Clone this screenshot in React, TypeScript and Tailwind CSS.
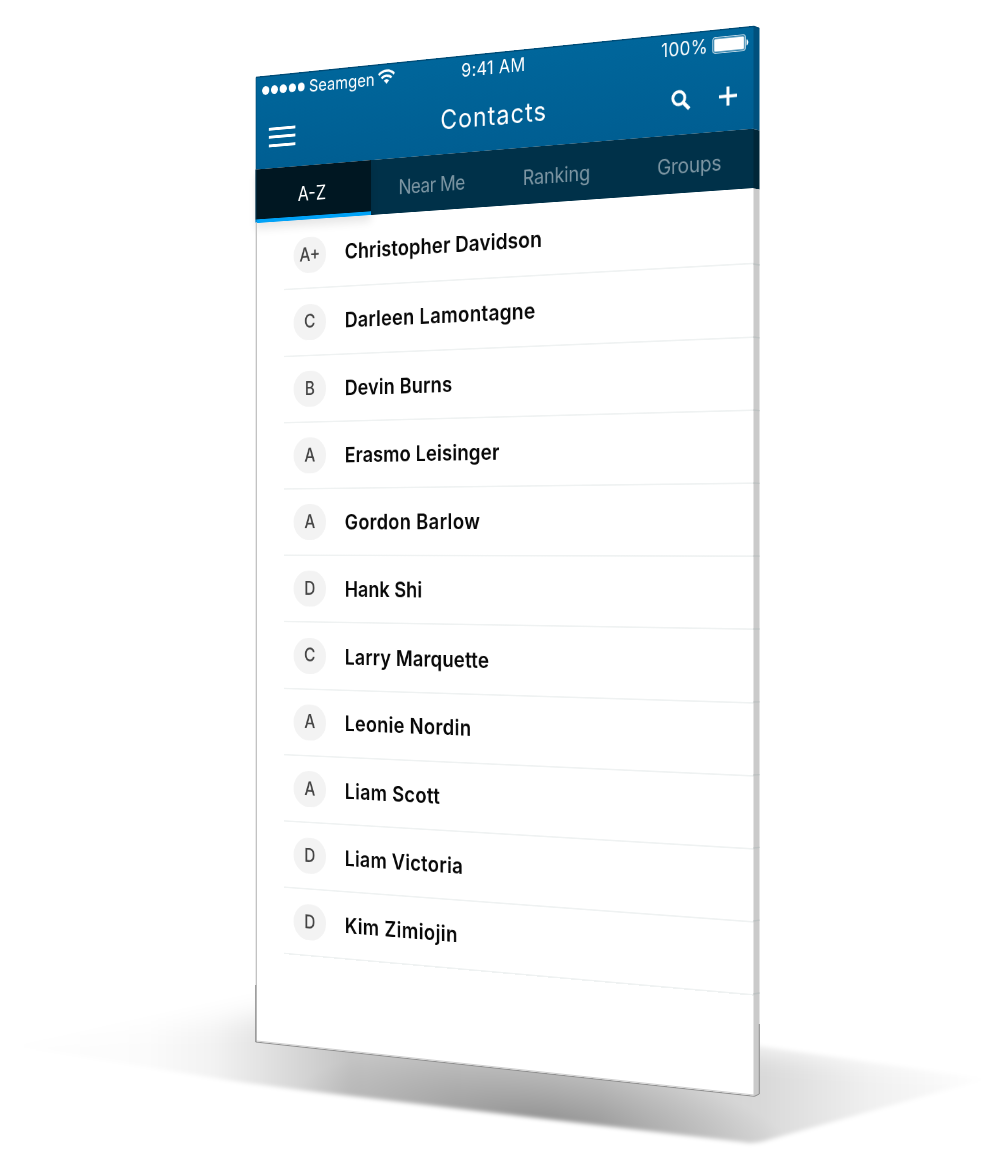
const W = 750;
const H = 1334;

// Screen corners on the page: both vertical edges stay vertical.
const LEFT = 255.5;
const RIGHT = 754;
const TL = 77;
const BL = 1042;
const TR = 26;
const BR = 1096;

function perspective() {
  const w = (BL - TL) / (BR - TR);
  const g = (w - 1) / W;
  const a = (RIGHT * w - LEFT) / W;
  const d = (TR * w - TL) / W;
  const e = (BL - TL) / H;
  return `matrix3d(${a},${d},0,${g},0,${e},0,0,0,0,1,0,${LEFT},${TL},0,1)`;
}

const contacts = [
  { grade: "A+", name: "Christopher Davidson", fit: "tracking-[0.2px] pb-[3px]" },
  { grade: "C", name: "Darleen Lamontagne", fit: "tracking-[0.45px]" },
  { grade: "B", name: "Devin Burns", fit: "tracking-[0.2px] pt-0.5" },
  { grade: "A", name: "Erasmo Leisinger", fit: "tracking-[0.2px] pt-px" },
  { grade: "A", name: "Gordon Barlow", fit: "tracking-[0.55px] pt-px" },
  { grade: "D", name: "Hank Shi", fit: "tracking-[0.05px] pt-0.5" },
  { grade: "C", name: "Larry Marquette", fit: "tracking-[0.25px] pt-[3px]" },
  { grade: "A", name: "Leonie Nordin", fit: "tracking-[0.5px] pt-px" },
  { grade: "A", name: "Liam Scott", fit: "tracking-[0.55px] pt-px" },
  { grade: "D", name: "Liam Victoria", fit: "tracking-[0.4px] pt-px" },
  { grade: "D", name: "Kim Zimiojin", fit: "tracking-[0.65px] pt-px" },
];

function FloorShadow() {
  return (
    <svg className="absolute inset-0" width="1000" height="1150" viewBox="0 0 1000 1150">
      <defs>
        <linearGradient id="wide" gradientUnits="userSpaceOnUse" x1="20" y1="0" x2="985" y2="0">
          <stop offset="0" stopOpacity="0.005" />
          <stop offset="0.13" stopOpacity="0.015" />
          <stop offset="0.2" stopOpacity="0.05" />
          <stop offset="0.25" stopOpacity="0.11" />
          <stop offset="0.34" stopOpacity="0.23" />
          <stop offset="0.6" stopOpacity="0.22" />
          <stop offset="0.77" stopOpacity="0.15" />
          <stop offset="0.88" stopOpacity="0.06" />
          <stop offset="1" stopOpacity="0.005" />
        </linearGradient>
        <radialGradient id="core" gradientUnits="userSpaceOnUse" cx="0" cy="0" r="1" gradientTransform="translate(545 1125) rotate(7) scale(250 70)">
          <stop offset="0" stopOpacity="0.27" />
          <stop offset="0.5" stopOpacity="0.13" />
          <stop offset="1" stopOpacity="0" />
        </radialGradient>
        <filter id="haze" filterUnits="userSpaceOnUse" x="-60" y="850" width="1120" height="350">
          <feGaussianBlur stdDeviation="13" />
        </filter>
        <filter id="soft" filterUnits="userSpaceOnUse" x="0" y="950" width="1000" height="200">
          <feGaussianBlur stdDeviation="2" />
        </filter>
        <mask id="fade" maskUnits="userSpaceOnUse" x="0" y="950" width="1000" height="200">
          <rect x="0" y="950" width="1000" height="200" fill="#fff" />
          <path d="M-60 850 H340 V1008 L-60 1050Z" fill="#000" filter="url(#haze)" />
          <path d="M700 850 H1060 V1078 L700 1044Z" fill="#000" filter="url(#haze)" />
        </mask>
      </defs>
      <g filter="url(#soft)">
        <g mask="url(#fade)">
          <path d="M15 1046 L256 992 L500 1000 L760 1046 L985 1079 L768 1140 Q755 1144.500 742 1142 L520 1116 L300 1090 L240 1082 Z" fill="url(#wide)" />
          <path d="M240 1030 L760 1080 L850 1117 L768 1140 Q755 1144.500 742 1142 L520 1116 L300 1090 L240 1082 Z" fill="url(#core)" />
        </g>
      </g>
    </svg>
  );
}

function PanelEdges() {
  return (
    <svg className="absolute inset-0" width="1000" height="1150" viewBox="0 0 1000 1150">
      <path d="M753.5 26 L759.5 28 V130.5 L753.5 129Z" fill="#00507d" />
      <path d="M753.5 129 L759.5 130.5 V189.5 L753.5 188.5Z" fill="#002638" />
      <path d="M753.5 188.5 L759.5 189.5 V1094 L755 1096.5 L753.5 1096Z" fill="#cacaca" />
      {contacts.map((c, i) => (
        <path key={c.name} d={`M753.5 ${264 + i * 73} l6 ${1 - i * 0.2}`} stroke="#bcc1c1" strokeWidth="1.3" />
      ))}
      <path d="M256.3 222 V1042" stroke="#bdbdbd" strokeWidth="1.2" />
      <path d="M256 77.5 V222" stroke="#00486f" strokeOpacity="0.6" strokeWidth="1" />
      <path d="M256 77.4 L754 26.4 L759 28.3" fill="none" stroke="#004b75" strokeWidth="1.2" />
      <path d="M255.7 985 V1042 L754.5 1096.3 L759.3 1094 V1024" fill="none" stroke="#8e8e8e" strokeWidth="1" />
      <path d="M257 1041 L754 1095" stroke="#cfcfcf" strokeWidth="1" />
    </svg>
  );
}

function StatusBar() {
  return (
    <div className="flex h-10 items-center leading-none">
      <div className="flex flex-1 items-center pl-[11px]">
        <div className="flex gap-[3.2px]">
          {[0, 1, 2, 3, 4].map((i) => (
            <span key={i} className="size-[11.5px] rounded-full bg-white" />
          ))}
        </div>
        <span className="ml-[7px] pb-px text-[23.5px] tracking-[0.1px]">Seamgen</span>
        <svg className="mb-1.5 ml-[5px]" width="27" height="20" viewBox="0 0 27 20" fill="none" stroke="#fff" strokeWidth="3.2">
          <path d="M1.3 7.5a17.2 17.2 0 0 1 24.4 0" />
          <path d="M5.6 12.3a11.2 11.2 0 0 1 15.8 0" />
          <path d="M13.5 20l-4.2-4.3a6 6 0 0 1 8.4 0z" fill="#fff" stroke="none" />
        </svg>
      </div>
      <span className="pb-px text-[24.5px] tracking-[0.5px]">9:41 AM</span>
      <div className="flex flex-1 items-center justify-end pr-[7px]">
        <span className="text-[24px] tracking-[0.4px]">100%</span>
        <svg className="mb-0.5 ml-1.5" width="50" height="21" viewBox="0 0 50 21">
          <rect x="0.7" y="0.7" width="44.6" height="19.6" rx="3" fill="none" stroke="#fff" strokeOpacity="0.75" strokeWidth="1.2" />
          <rect x="2.4" y="2.4" width="41.2" height="16.2" rx="1.5" fill="#fff" />
          <path d="M46.8 6.5c3.4 .6 3.4 7.4 0 8z" fill="#fff" />
        </svg>
      </div>
    </div>
  );
}

function NavBar() {
  return (
    <div className="flex h-[88px] items-center pr-[23px] pl-[22px]">
      <div className="flex flex-1 pt-0.5">
        <div className="flex w-11 flex-col gap-[7.5px]">
          <span className="h-1 bg-white" />
          <span className="h-1 bg-white" />
          <span className="h-1 bg-white" />
        </div>
      </div>
      <h1 className="pb-[3px] pl-[5px] text-[35px] leading-none tracking-[1.6px]">Contacts</h1>
      <div className="flex flex-1 items-center justify-end gap-[39px]">
        <svg width="27" height="27" viewBox="0 0 27 27" fill="none" stroke="#fff">
          <circle cx="10.5" cy="10.5" r="8.3" strokeWidth="4" />
          <path d="M16.5 16.5L25 25" strokeWidth="4.6" />
        </svg>
        <svg width="25" height="25" viewBox="0 0 25 25" stroke="#fff" strokeWidth="4">
          <path d="M12.5 0.5v24M0 12.5h25" />
        </svg>
      </div>
    </div>
  );
}

function Tabs() {
  return (
    <nav className="grid h-[74px] grid-cols-4 bg-[#003149] text-[26.5px] text-[#7d96a3]">
      <div className="flex items-center justify-center border-b-[5px] border-[#00a2f7] bg-[#001722] pt-2 pr-0.5 text-white shadow-[0_8px_12px_rgba(0,0,0,0.1)]">A-Z</div>
      <div className="flex items-center justify-center pt-[5px] pl-[3px] tracking-[-0.7px]">Near Me</div>
      <div className="flex items-center justify-center pt-[5px] pl-1 tracking-[-0.2px]">Ranking</div>
      <div className="flex items-center justify-center pt-[5px] pl-[9px] tracking-[-0.3px]">Groups</div>
    </nav>
  );
}

export default function App() {
  return (
    <main className="relative h-[1150px] w-[1000px] overflow-hidden bg-white font-['Inter',sans-serif]">
      <FloorShadow />
      <section
        className="absolute top-0 left-0 flex h-[1334px] w-[750px] origin-top-left flex-col bg-white"
        style={{ transform: perspective() }}
      >
        <header className="bg-linear-to-b from-[#00669b] to-[#005e92] text-white">
          <StatusBar />
          <NavBar />
        </header>
        <Tabs />
        <ul className="mt-[4.3px]">
          {contacts.map((c) => (
            <li key={c.name} className="ml-[47px] flex h-[91.2px] items-center border-b-2 border-[#eff2f2] pl-4">
              <span className="flex h-[49px] w-[53px] items-center justify-center rounded-full bg-[#f3f3f3] text-[25px] font-medium text-[#444]">
                {c.grade}
              </span>
              <span className={`ml-[30px] text-[28.5px] font-semibold whitespace-nowrap text-[#080808] [font-feature-settings:'calt'_0,'liga'_0] ${c.fit}`}>
                {c.name}
              </span>
            </li>
          ))}
        </ul>
      </section>
      <PanelEdges />
    </main>
  );
}
